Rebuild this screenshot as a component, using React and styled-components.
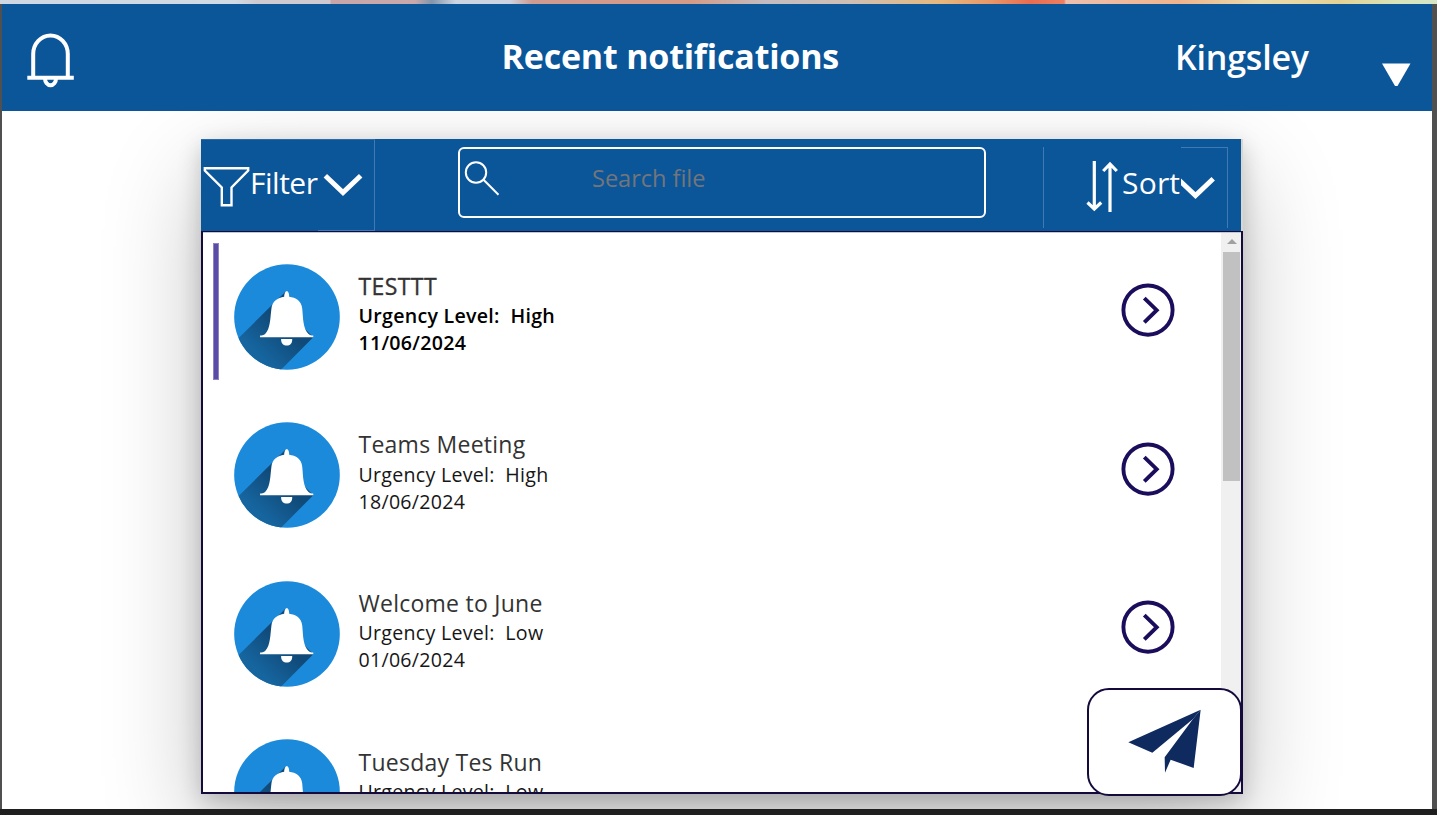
import React from "react";
import styled, { createGlobalStyle } from "styled-components";

const BLUE = "#0b5599";
const NAVY = "#140a3c";

const GlobalStyle = createGlobalStyle`
  * { box-sizing: border-box; }
  html, body { margin: 0; padding: 0; }
  body { font-family: "Open Sans", "Noto Sans", sans-serif; overflow: hidden; background: #fff; }
  svg { display: block; flex: none; }
`;

const Screen = styled.div`
  width: 1437px;
  height: 815px;
  display: flex;
  flex-direction: column;
  background: #1f1f1f;
`;

const Backdrop = styled.div`
  height: 4px;
  flex: none;
  background: linear-gradient(90deg, #cfd8e2 0, #d2dae4 235px, #cfc9d0 258px, #cfc9d0 330px, #c9a5a8 331px, #c9a9ac 415px, #8295ab 432px, #a9b6c8 444px, #cdd5e2 456px, #cdd3e0 510px, #cf9a90 532px, #d59b85 690px, #c4bcc0 765px, #cfbfb4 850px, #e6b87e 940px, #e89868 990px, #e96c50 1030px, #ee7f62 1064px, #edbfae 1066px, #efb48c 1180px, #eadcae 1260px, #e4d295 1340px, #d9e4bb 1400px, #d5e6c6 1437px);
`;

const AppFrame = styled.div`
  width: 1437px;
  height: 805px;
  flex: none;
  display: flex;
  flex-direction: column;
  border-left: 2px solid #505050;
  border-right: 5px solid #505050;
  background: #fff;
  overflow: hidden;
`;

const Header = styled.header`
  height: 107px;
  flex: none;
  display: grid;
  grid-template-columns: 499.5px 673.5px 1fr;
  background: ${BLUE};
  color: #fff;
  position: relative;
  z-index: 1;
`;

const HeaderBell = styled.div`
  padding: 28px 0 0 24px;
`;

const Title = styled.h1`
  margin: 0;
  padding-top: 28px;
  font-size: 34px;
  letter-spacing: -0.2px;
  line-height: 48px;
  font-weight: 700;
  white-space: nowrap;
`;

const User = styled.div`
  display: flex;
  justify-content: space-between;
  padding: 29px 21px 0 0;
  font-size: 34px;
  letter-spacing: -0.2px;
  line-height: 48px;
  font-weight: 600;
  svg { margin-top: 30px; }
`;

const Main = styled.main`
  flex: 1;
  min-height: 0;
  padding: 28px 0 0 199px;
`;

const Card = styled.section`
  width: 1042px;
  height: 655px;
  position: relative;
  display: flex;
  flex-direction: column;
  background: #d9d6d2;
  box-shadow: 0 36px 92px rgba(0, 0, 0, 0.24), 0 7px 22px rgba(0, 0, 0, 0.2);
`;

const Toolbar = styled.div`
  width: 1040px;
  height: 92px;
  flex: none;
  display: flex;
  background: ${BLUE};
  color: #fff;
`;

const FilterButton = styled.div`
  width: 174px;
  height: 92px;
  display: flex;
  padding-left: 2px;
  border-top: 1px solid #2a6aa6;
`;

const ToolLabel = styled.span`
  width: ${(p) => p.$width}px;
  padding-top: ${(p) => p.$top}px;
  font-size: 30px;
  line-height: 40px;
  letter-spacing: ${(p) => p.$spacing || 0}px;
  white-space: nowrap;
`;

const FilterArrow = styled.div`
  width: 57px;
  margin-left: auto;
  padding: 32px 0 0 5px;
  border: 1px solid #3f7bb2;
  border-width: 0 1px 1px 0;
`;

const SearchBox = styled.div`
  width: 527.5px;
  height: 70.5px;
  margin: 8px 0 0 83px;
  display: flex;
  border: 2.5px solid #fff;
  border-radius: 6px;
  > svg { margin: 12px 0 0 4px; }
`;

const Placeholder = styled.span`
  margin-left: 92px;
  padding-top: 13px;
  font-size: 23.6px;
  letter-spacing: -0.05px;
  line-height: 32px;
  font-weight: 400;
  color: #73757a;
`;

const SortButton = styled.div`
  width: 185px;
  height: 81px;
  margin: 8px 0 0 57.5px;
  display: flex;
  border-left: 1px solid #3f7bb2;
  > svg { margin: 13px 4px 0 42px; }
`;

const SortArrow = styled.div`
  flex: 1;
  padding-top: 27px;
  border: 1px solid #3f7bb2;
  border-width: 1px 1px 0 0;
  overflow: hidden;
`;

const ListBox = styled.div`
  height: 563px;
  display: flex;
  padding-top: 1px;
  border: 2px solid ${NAVY};
  border-top-width: 1px;
  background: #fff;
  box-shadow: inset 0 1px 0 #c9c6d4;
  overflow: hidden;
`;

const Rows = styled.div`
  flex: 1;
`;

const Row = styled.article`
  height: 158.6px;
  display: flex;
  padding-left: 10px;
`;

const Marker = styled.div`
  width: 6px;
  height: 137px;
  margin: 10px 14.5px 0 0;
  background: ${(p) => (p.$on ? "#5a4ca6" : "transparent")};
  border: 1px solid ${(p) => (p.$on ? "#8d83c2" : "transparent")};
  border-width: 1px 0.5px;
`;

const RowBell = styled.div`
  padding-top: 30.6px;
  width: 125px;
`;

const RowText = styled.div`
  flex: 1;
  padding-top: 36.8px;
`;

const RowTitle = styled.div`
  height: 32.2px;
  font-size: 23px;
  line-height: 32px;
  letter-spacing: ${(p) => (p.$unread ? 0.4 : 0.25)}px;
  font-weight: ${(p) => (p.$unread ? 500 : 400)};
  -webkit-text-stroke: ${(p) => (p.$unread ? 0.35 : 0)}px #333;
  color: #333;
  white-space: pre;
`;

const RowLine = styled.div`
  font-size: 19.6px;
  line-height: 27px;
  letter-spacing: 0.27px;
  color: ${(p) => (p.$unread ? "#000" : "#161616")};
  font-weight: ${(p) => (p.$unread ? 600 : 400)};
  white-space: pre;
`;

const RowOpen = styled.div`
  padding: 50px 46px 0 0;
`;

const Scrollbar = styled.div`
  width: 20px;
  padding: 0 1px 0 2px;
  display: flex;
  flex-direction: column;
  background: #f0f0f0;
`;

const ScrollUp = styled.div`
  height: 19px;
  display: flex;
  justify-content: center;
  padding-top: 6px;
`;

const ScrollThumb = styled.div`
  height: 229px;
  background: #c1c1c1;
`;

const SendButton = styled.div`
  position: absolute;
  right: 1px;
  bottom: -2px;
  width: 155px;
  height: 108px;
  border: 2px solid ${NAVY};
  border-radius: 22px;
  background: #fff;
`;

const BellOutline = () => (
  <svg width="50" height="58" viewBox="26 32 50 58" fill="none" stroke="#fff" strokeWidth="4">
    <path d="M33.200 77V54a17.300 18.500 0 0 1 34.600 0v23" />
    <path d="M27.300 77.700h46.500" />
    <path d="M45 78.500a5.500 6.800 0 0 0 11 0" />
  </svg>
);

const FunnelSvg = styled.svg`
  margin-top: 26px;
`;

const Funnel = () => (
  <FunnelSvg width="47" height="42" viewBox="202.500 166 47 42" fill="none" stroke="#fff" strokeWidth="2.400">
    <path d="M204.300 168.200H247.700V170.600L231 187.500V205.300H221.300V187.500L204.300 170.600Z" />
  </FunnelSvg>
);

const Chevron = ({ shift = 0 }) => (
  <svg width="40" height="26" viewBox={`${shift} 0 40 26`} fill="none" stroke="#fff" strokeWidth="5">
    <path d="M2.300 3.800L20 20.500L37.700 3.800" />
  </svg>
);

const Magnifier = () => (
  <svg width="36" height="36" viewBox="0 0 36 36" fill="none" stroke="#fff" strokeWidth="2">
    <circle cx="12" cy="11.500" r="10.200" />
    <path d="M19.300 18.500L34.500 33.700" />
  </svg>
);

const SortArrows = () => (
  <svg width="32" height="54" viewBox="0 0 32 54" fill="none" stroke="#fff" strokeWidth="3.200">
    <path d="M8.300 1V48M1.500 42.500L8.300 49L15.200 42.500" />
    <path d="M24 52V4M17.200 11L24 4L30.800 11" />
  </svg>
);

const NoticeBell = ({ id }) => (
  <svg width="106" height="106" viewBox="117 86 317 317">
    <defs>
      <linearGradient id={`fade${id}`} gradientUnits="userSpaceOnUse" x1="280" y1="260" x2="190" y2="355">
        <stop offset="0.15" stopColor="#104a79" />
        <stop offset="1" stopColor="#16659f" />
      </linearGradient>
      <clipPath id={`disc${id}`}>
        <circle cx="275.500" cy="244.500" r="158" />
      </clipPath>
    </defs>
    <g clipPath={`url(#disc${id})`}>
      <rect x="117" y="86" width="317" height="317" fill="#1c8adb" />
      <path d="M270 170L110 328V430H230L354 305L290 240Z" fill={`url(#fade${id})`} />
    </g>
    <path
      d="M275 167C281 169 282 177 282 184C302 186 319 197 321 219C324 249 323 280 340 295C344 299 349 300 354 300V305H195V300C200 300 206 299 210 295C226 280 225 249 229 219C231 197 248 187 267 184C267 177 269 169 275 167Z"
      fill="#fff"
    />
    <path d="M258 310H291C292 323 284 330 275 330C265 330 257 323 258 310Z" fill="#fff" />
  </svg>
);

const OpenCircle = () => (
  <svg width="54" height="54" viewBox="0 0 54 54" fill="none" stroke="#1b0d5c" strokeWidth="3.900">
    <circle cx="27" cy="27.100" r="24.600" />
    <path d="M23.300 15.200L35.700 27.200L23.300 39.300" />
  </svg>
);

const PaperPlane = () => (
  <svg width="151" height="104" viewBox="58 60 453 312" fill="#0f2a5e">
    <path d="M176 217L393 119L370 147L248 248Z" />
    <path d="M393 119L372 294L303 269L286 308L285 262L370 147Z" />
  </svg>
);

const notices = [
  { title: "TESTTT", level: "High", date: "11/06/2024", unread: true },
  { title: "Teams Meeting", level: "High", date: "18/06/2024" },
  { title: "Welcome to June", level: "Low", date: "01/06/2024" },
  { title: "Tuesday Tes Run", level: "Low" },
];

export default function App() {
  return (
    <Screen>
      <GlobalStyle />
      <Backdrop />
      <AppFrame>
        <Header>
          <HeaderBell><BellOutline /></HeaderBell>
          <Title>Recent notifications</Title>
          <User>
            Kingsley
            <svg width="30" height="24" viewBox="0 0 30 24"><path d="M1 0.500H29.500L16.500 23H14Z" fill="#fff" /></svg>
          </User>
        </Header>
        <Main>
          <Card>
            <Toolbar>
              <FilterButton>
                <Funnel />
                <ToolLabel $width={66} $top={23} $spacing={-0.5}>Filter</ToolLabel>
                <FilterArrow><Chevron /></FilterArrow>
              </FilterButton>
              <SearchBox>
                <Magnifier />
                <Placeholder>Search file</Placeholder>
              </SearchBox>
              <SortButton>
                <SortArrows />
                <ToolLabel $width={59} $top={16} $spacing={0.2}>Sort</ToolLabel>
                <SortArrow><Chevron shift={5.5} /></SortArrow>
              </SortButton>
            </Toolbar>
            <ListBox>
              <Rows>
                {notices.map((n, i) => (
                  <Row key={n.title}>
                    <Marker $on={n.unread} />
                    <RowBell><NoticeBell id={i} /></RowBell>
                    <RowText>
                      <RowTitle $unread={n.unread}>{n.title}</RowTitle>
                      <RowLine $unread={n.unread}>{`Urgency Level:  ${n.level}`}</RowLine>
                      {n.date && <RowLine $unread={n.unread}>{n.date}</RowLine>}
                    </RowText>
                    <RowOpen><OpenCircle /></RowOpen>
                  </Row>
                ))}
              </Rows>
              <Scrollbar>
                <ScrollUp>
                  <svg width="10" height="5" viewBox="0 0 10 5"><path d="M0 5L5 0L10 5Z" fill="#a0a0a0" /></svg>
                </ScrollUp>
                <ScrollThumb />
              </Scrollbar>
            </ListBox>
            <SendButton><PaperPlane /></SendButton>
          </Card>
        </Main>
      </AppFrame>
    </Screen>
  );
}
